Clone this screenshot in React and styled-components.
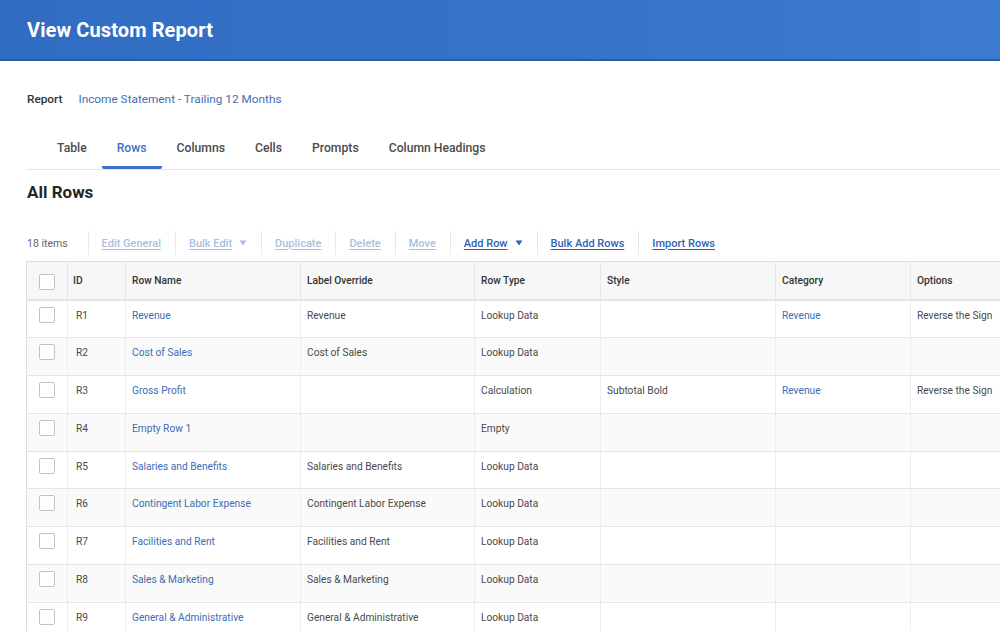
import React from 'react'
import styled, { createGlobalStyle } from 'styled-components';

const Global = createGlobalStyle`
  html, body { margin:0; padding:0; background:#fff; overflow:hidden; }
  body { font-family: Roboto, "Liberation Sans", Arial, sans-serif; width:1000px; height:631px; }
`

const Header = styled.header`
  height:59px;
  background:linear-gradient(90deg,#316cc3 0%,#3674c9 60%,#3c7bd0 100%);
  border-bottom:2px solid #2b5ca9;
  display:flex;
  align-items:center;
  padding-left:27px;
  h1{
    margin:0;
    color:#fff;
    font-size:20px;
    font-weight:700;
    letter-spacing:0.1px;
  }
`

const Content = styled.main`
  padding-left:26px;
`

const ReportLine = styled.div`
  margin-top:30px;
  display:flex;
  align-items:center;
  gap:16px;
  line-height:16px;
  font-size:11.8px;
  padding-left:1px;
  .label{ color:#333; font-weight:500; }
  .value{ color:#4170b5; }
`

const TabBar = styled.nav`
  margin-top:23px;
  display:flex;
  padding-left:16px;
  border-bottom:1px solid #e6e6e6;
`

const Tab = styled.div`
  padding:10px 15px 10px;
  line-height:16px;
  font-size:12.2px;
  font-weight:500;
  color:${p => p.$active ? '#3b72c6' : '#4a4a4a'};
  border-bottom:3px solid ${p => p.$active ? '#3b72c6' : 'transparent'};
  border-radius:2px;
`

const Title = styled.h2`
  margin:11px 0 0 1px;
  font-size:17px;
  line-height:22px;
  font-weight:700;
  color:#262626;
`

const Toolbar = styled.div`
  margin-top:28px;
  height:24px;
  display:flex;
  align-items:stretch;
  font-size:11px;
`

const Count = styled.span`
  color:#666;
  font-size:10.5px;
  padding:0 20px 0 1px;
  display:flex;
  align-items:center;
`

const Action = styled.span`
  display:flex;
  align-items:center;
  gap:7px;
  padding:0 14px 0 13px;
  border-left:1px solid #e8e8e8;
  font-weight:500;
  color:${p => p.$disabled ? '#a8bfe2' : '#2e63b5'};
  a{
    color:inherit;
    text-decoration:underline;
    text-underline-offset:2px;
  }
`

const Caret = () => (
  <svg width="8" height="6" viewBox="0 0 8 6" aria-hidden="true">
    <path d="M0.5 0.5 L7.5 0.5 L4 5.5 Z" fill="currentColor" />
  </svg>
)

const TableWrap = styled.div`
  margin-top:6px;
  overflow:hidden;
`

const Table = styled.table`
  border-collapse:collapse;
  table-layout:fixed;
  width:1110px;
  font-size:10.2px;
  border-left:1px solid #dcdcdc;
  border-top:1px solid #dcdcdc;
  th{
    background:#f7f7f7;
    height:37px;
    text-align:left;
    font-weight:500;
    color:#333;
    vertical-align:middle;
    padding:0 6px;
    border-right:1px solid #e9e9e9;
    border-bottom:2px solid #e4e4e4;
  }
  td{
    height:37.75px;
    box-sizing:border-box;
    padding:8px 6px 0;
    vertical-align:top;
    line-height:13px;
    color:#4a4a4a;
    border-right:1px solid #ededed;
    border-bottom:1px solid #e6e6e6;
  }
  tbody tr:nth-child(even) td{ background:#fafafa; }
  th.id{ padding-left:5px; }
  td.id{ padding-left:8px; }
  th.chk{ padding:0; vertical-align:middle; }
  td.chk{ padding:6px 0 0; }
`

const Col = styled.col`
  width:${p => p.$w}px;
`

const Box = styled.span`
  display:block;
  width:16px;
  height:16px;
  margin-left:12px;
  border:1px solid #c3c3c3;
  border-radius:2px;
  background:#fff;
  box-sizing:border-box;
`

const HeadBox = styled(Box)`
  margin-top:3px;
`

const Link = styled.span`
  color:#3c6cb4;
`

const rows = [
  ['R1','Revenue','Revenue','Lookup Data','','Revenue','Reverse the Sign'],
  ['R2','Cost of Sales','Cost of Sales','Lookup Data','','',''],
  ['R3','Gross Profit','','Calculation','Subtotal Bold','Revenue','Reverse the Sign'],
  ['R4','Empty Row 1','','Empty','','',''],
  ['R5','Salaries and Benefits','Salaries and Benefits','Lookup Data','','',''],
  ['R6','Contingent Labor Expense','Contingent Labor Expense','Lookup Data','','',''],
  ['R7','Facilities and Rent','Facilities and Rent','Lookup Data','','',''],
  ['R8','Sales & Marketing','Sales & Marketing','Lookup Data','','',''],
  ['R9','General & Administrative','General & Administrative','Lookup Data','','',''],
]

const tabs = ['Table','Rows','Columns','Cells','Prompts','Column Headings']

const actions = [
  { label:'Edit General', disabled:true },
  { label:'Bulk Edit', disabled:true, caret:true },
  { label:'Duplicate', disabled:true },
  { label:'Delete', disabled:true },
  { label:'Move', disabled:true },
  { label:'Add Row', caret:true },
  { label:'Bulk Add Rows' },
  { label:'Import Rows' },
]

const widths = [41, 58, 175, 174, 126, 175, 135, 226]

export default function App() {
  return (
    <>
      <Global />
      <Header><h1>View Custom Report</h1></Header>
      <Content>
        <ReportLine>
          <span className='label'>Report</span>
          <span className='value'>Income Statement - Trailing 12 Months</span>
        </ReportLine>
        <TabBar>
          {tabs.map(t => <Tab key={t} $active={t === 'Rows'}>{t}</Tab>)}
        </TabBar>
        <Title>All Rows</Title>
        <Toolbar>
          <Count>18 items</Count>
          {actions.map(a => (
            <Action key={a.label} $disabled={a.disabled}>
              <a>{a.label}</a>
              {a.caret && <Caret />}
            </Action>
          ))}
        </Toolbar>
        <TableWrap>
          <Table>
            <colgroup>
              {widths.map((w, i) => <Col key={i} $w={w} />)}
            </colgroup>
            <thead>
              <tr>
                <th className='chk'><HeadBox /></th>
                <th className='id'>ID</th>
                <th>Row Name</th>
                <th>Label Override</th>
                <th>Row Type</th>
                <th>Style</th>
                <th>Category</th>
                <th>Options</th>
              </tr>
            </thead>
            <tbody>
              {rows.map(r => (
                <tr key={r[0]}>
                  <td className='chk'><Box /></td>
                  <td className='id'>{r[0]}</td>
                  <td><Link>{r[1]}</Link></td>
                  <td>{r[2]}</td>
                  <td>{r[3]}</td>
                  <td>{r[4]}</td>
                  <td><Link>{r[5]}</Link></td>
                  <td>{r[6]}</td>
                </tr>
              ))}
            </tbody>
          </Table>
        </TableWrap>
      </Content>
    </>
  )
}
